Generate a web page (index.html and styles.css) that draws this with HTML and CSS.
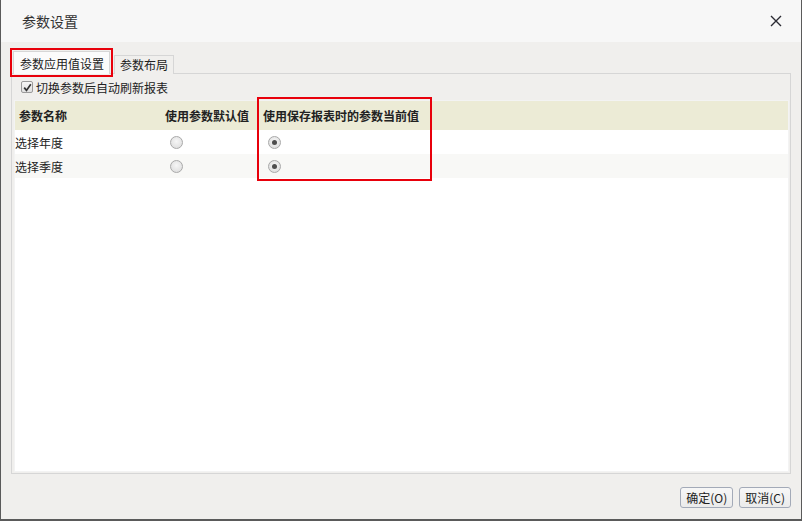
FILE: index.html
```html
<!doctype html>
<html>
	<head>
		<meta charset='utf-8'>
		<title>参数设置</title>
		<link rel="stylesheet" href="styles.css">
	</head>
	<body>
		<div class='dialog'>
			<div class='titlebar'>
				<span class='title'>参数设置</span>
				<svg class='close' width='12' height='12' viewBox='0 0 12 12'>
					<path d='M1 1 L11 11 M11 1 L1 11' stroke='#2b2b33' stroke-width='1.4' fill='none'/>
				</svg>
			</div>
			<div class='content'>
				<div class='tabs'>
					<div class='tab active'>参数应用值设置</div>
					<div class='tab'>参数布局</div>
				</div>
				<div class='panel'>
					<label class='check-row'>
						<span class='checkbox'>
							<svg width='9' height='9' viewBox='0 0 9 9'>
								<path d='M1.2 4.6 L3.5 7.4 L7.8 1.2' stroke='#333' stroke-width='1.7' fill='none'/>
							</svg>
						</span>
						切换参数后自动刷新报表
					</label>
					<div class='table'>
						<div class='row head'>
							<div class='c1'>参数名称</div>
							<div class='c2'>使用参数默认值</div>
							<div class='c3'>使用保存报表时的参数当前值</div>
						</div>
						<div class='row'>
							<div class='c1'>选择年度</div>
							<div class='c2'><span class='radio'></span></div>
							<div class='c3'><span class='radio on'></span></div>
						</div>
						<div class='row alt'>
							<div class='c1'>选择季度</div>
							<div class='c2'><span class='radio'></span></div>
							<div class='c3'><span class='radio on'></span></div>
						</div>
						<div class='mark'></div>
					</div>
				</div>
				<div class='buttons'>
					<button>确定(O)</button>
					<button>取消(C)</button>
				</div>
			</div>
		</div>
	</body>
</html>
```

FILE: styles.css
```css
html {
	background: #5a5a5a;
}

body {
	margin: 0;
	font-family: "Noto Sans CJK SC", "Noto Sans", sans-serif;
	font-size: 12px;
	color: #222;
}

.dialog {
	width: 800px;
	height: 519px;
	margin-left: 1px;
	background: #f0efed;
	display: flex;
	flex-direction: column;
}

.titlebar {
	height: 42px;
	flex: none;
	background: #f7f7f7;
	display: flex;
	align-items: center;
	justify-content: space-between;
	padding: 0 19px 0 21px;
}

.title {
	font-size: 14px;
	color: #333;
}

.content {
	flex: 1;
	display: flex;
	flex-direction: column;
	padding: 10px 10px 0 10px;
}

/* tabs */

.tabs {
	display: flex;
	align-items: flex-end;
	gap: 4px;
	height: 22px;
	padding-left: 2px;
	position: relative;
	z-index: 1;
}

.tab {
	height: 19px;
	line-height: 18px;
	padding: 0 5px;
	white-space: nowrap;
	border: 1px solid #d6d6d6;
	border-bottom: none;
	background: #f0efed;
	box-sizing: border-box;
}

.tab.active {
	height: 23px;
	padding: 0 5px 0 6px;
	line-height: 23px;
	background: #fbfbfb;
	outline: 2px solid #e8000b;
	outline-offset: 1px;
}

.panel {
	flex: none;
	height: 401px;
	border: 1px solid #d6d6d6;
	margin-top: -1px;
	padding: 0 1px 1px 2px;
	display: flex;
	flex-direction: column;
	box-sizing: border-box;
}

.check-row {
	height: 26px;
	display: flex;
	align-items: center;
	gap: 3px;
	padding-left: 7px;
}

.checkbox {
	width: 10px;
	height: 10px;
	border: 1px solid #9a9a9a;
	border-radius: 2px;
	background: linear-gradient(#f6f6f6, #e0e0e0);
	display: flex;
	align-items: center;
	justify-content: center;
}

/* table */

.table {
	flex: 1;
	background: #fff;
	border: 1px solid #f3f3f3;
	position: relative;
}

.row {
	display: flex;
	height: 24px;
	align-items: center;
}

.row.head {
	height: 29px;
	background: #ecebd6;
	font-weight: bold;
}

.row.alt {
	background: #f8f8f6;
}

.c1 {
	width: 146px;
}

.c2 {
	width: 98px;
}

.c3 {
	width: 175px;
}

.head > div {
	padding-left: 4px;
	box-sizing: border-box;
}

.row .radio {
	display: block;
	margin-left: 9px;
}

.radio {
	width: 11px;
	height: 11px;
	border: 1px solid #a9a9a9;
	border-radius: 50%;
	background: radial-gradient(circle at 50% 40%, #f6f6f6, #d9d9d9);
	position: relative;
}

.radio.on::after {
	content: '';
	position: absolute;
	left: 3px;
	top: 3px;
	width: 5px;
	height: 5px;
	border-radius: 50%;
	background: #4d4d4d;
}

/* red annotation round the third column */
.mark {
	position: absolute;
	left: 242px;
	top: -4px;
	width: 171px;
	height: 80px;
	border: 2px solid #e8000b;
}

/* buttons */

.buttons {
	display: flex;
	justify-content: flex-end;
	gap: 6px;
	padding-top: 13px;
}

button {
	font-family: inherit;
	font-size: 12px;
	height: 21px;
	padding: 0 5px;
	border: 1px solid #a3aab8;
	border-radius: 3px;
	background: linear-gradient(#f7f7f7, #ebebeb);
	color: #222;
}
```
